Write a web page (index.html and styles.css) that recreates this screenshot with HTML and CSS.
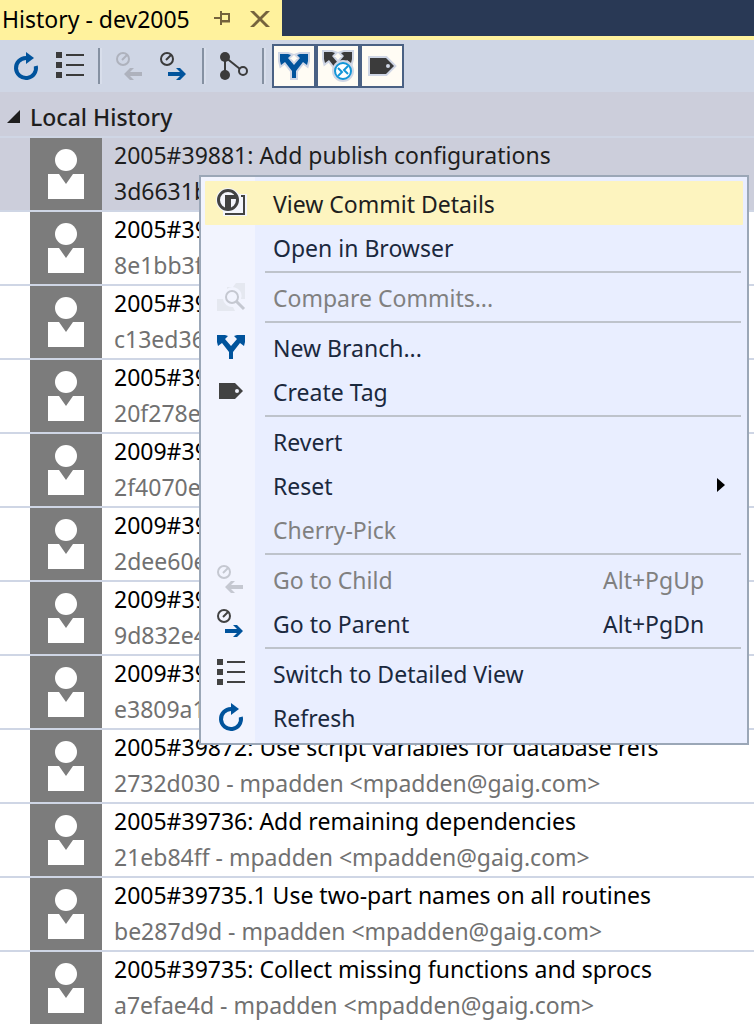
FILE: index.html
```html
<!DOCTYPE html>
<html lang="en">
<head>
<meta charset="utf-8">
<title>History - dev2005</title>
<link rel="stylesheet" href="styles.css">
</head>
<body>
<svg class="defs" aria-hidden="true">
  <symbol id="refresh" viewBox="0 0 32 32"><path d="M16 8A10 10 0 1 0 25.8 16" fill="none" stroke="currentColor" stroke-width="4"/><path d="M16 2l8 6-8 6z" fill="currentColor"/></symbol>
  <symbol id="list" viewBox="0 0 32 32"><path d="M2 2h6v6H2zM2 12h6v6H2zM2 22h6v6H2zM12 4h18v2H12zM12 14h18v2H12zM12 24h18v2H12z" fill="currentColor"/></symbol>
  <symbol id="clock" viewBox="0 0 32 32"><circle cx="9" cy="9" r="6" fill="none" stroke="currentColor" stroke-width="2"/><path d="M8 10l5-5" stroke="currentColor" stroke-width="2"/></symbol>
  <symbol id="arrow" viewBox="0 0 32 32"><path d="M10 22h12l-4-4h4l6 6-6 6h-4l4-4H10z" fill="currentColor"/></symbol>
  <symbol id="arrow-left" viewBox="0 0 32 32"><path d="M28 22H16l4-4h-4l-6 6 6 6h4l-4-4h12z" fill="currentColor"/></symbol>
  <symbol id="branch" viewBox="0 0 32 32" overflow="visible"><path d="M2 4h8l3 1-3 3 6 7 6-7-3-3 3-1h8v7l-1 4-4-3-7 9v7h-4v-7l-7-9-4 3-1-4z" fill="currentColor"/></symbol>
  <symbol id="tag" viewBox="0 0 32 32" overflow="visible"><path fill-rule="evenodd" d="M4 8h16l8 8-8 8H4zM22 14a2 2 0 1 0 0 4 2 2 0 0 0 0-4z" fill="currentColor"/></symbol>
  <symbol id="person" viewBox="0 0 72 72"><circle cx="36" cy="22" r="11" fill="#fff"/><path d="M18 36h11l7 10 7-10h11v25H18z" fill="#fff"/></symbol>
</svg>

<header class="tabs">
  <div class="tab">
    <h1 class="tab-title">History - dev2005</h1>
    <button class="tab-button" aria-label="Pin"><svg width="16" height="16"><path d="M0 7h6M7 0v14" fill="none" stroke="currentColor" stroke-width="2"/><path d="M7 3h8v7H7M7 10.500h9" fill="none" stroke="currentColor" stroke-width="2"/></svg></button>
    <button class="tab-button" aria-label="Close"><svg width="20" height="16"><path d="M0 0h4l6 6 6-6h4l-8 8 8 8h-4l-6-6-6 6H0l8-8z" fill="currentColor"/></svg></button>
  </div>
</header>

<div class="toolbar" role="toolbar" aria-label="History">
  <button class="tool blue" aria-label="Refresh"><svg class="icon"><use href="#refresh"/></svg></button>
  <button class="tool" aria-label="Detailed view"><svg class="icon"><use href="#list"/></svg></button>
  <span class="divider"></span>
  <button class="tool faded" aria-label="Go to child" disabled><svg class="icon"><use href="#clock"/><use href="#arrow-left"/></svg></button>
  <button class="tool" aria-label="Go to parent"><svg class="icon"><use href="#clock"/><use class="blue" href="#arrow"/></svg></button>
  <span class="divider"></span>
  <button class="tool" aria-label="Show graph"><svg class="icon"><path d="M7 7v18M7 7l15 12" stroke="currentColor" stroke-width="2"/><circle cx="7" cy="7" r="5" fill="currentColor"/><circle cx="7" cy="25" r="5" fill="currentColor"/><circle cx="25" cy="21" r="4" fill="none" stroke="currentColor" stroke-width="2"/></svg></button>
  <span class="divider"></span>
  <button class="tool pressed blue" aria-label="Local branches" aria-pressed="true"><svg class="icon halo"><use href="#branch"/></svg></button>
  <button class="tool pressed" aria-label="Remote branches" aria-pressed="true"><svg class="icon spill"><g class="halo"><use href="#branch" y="-2" width="32" height="32"/></g><circle cx="21" cy="21" r="11" fill="#cfd6e5"/><circle cx="21" cy="21" r="8" fill="#fff" stroke="#1396d8" stroke-width="2"/><path d="M16 18l4 4-4 4M26 16l-4 4 4 4" fill="none" stroke="#1396d8" stroke-width="2"/></svg></button>
  <button class="tool pressed" aria-label="Tags" aria-pressed="true"><svg class="icon halo"><use href="#tag"/></svg></button>
</div>

<main class="history">
  <h2 class="group"><svg class="expander" width="14" height="14"><path d="M13 0v13H0z" fill="currentColor"/></svg>Local History</h2>
  <ul class="commits">
    <li class="commit selected"><svg class="avatar"><use href="#person"/></svg><div class="text"><p>2005#39881: Add publish configurations</p><p class="meta">3d6631b</p></div></li>
    <li class="commit"><svg class="avatar"><use href="#person"/></svg><div class="text"><p>2005#39</p><p class="meta">8e1bb3f</p></div></li>
    <li class="commit"><svg class="avatar"><use href="#person"/></svg><div class="text"><p>2005#39</p><p class="meta">c13ed36</p></div></li>
    <li class="commit"><svg class="avatar"><use href="#person"/></svg><div class="text"><p>2005#39</p><p class="meta">20f278e</p></div></li>
    <li class="commit"><svg class="avatar"><use href="#person"/></svg><div class="text"><p>2009#39</p><p class="meta">2f4070e</p></div></li>
    <li class="commit"><svg class="avatar"><use href="#person"/></svg><div class="text"><p>2009#39</p><p class="meta">2dee60e</p></div></li>
    <li class="commit"><svg class="avatar"><use href="#person"/></svg><div class="text"><p>2009#39</p><p class="meta">9d832e4</p></div></li>
    <li class="commit"><svg class="avatar"><use href="#person"/></svg><div class="text"><p>2009#39</p><p class="meta">e3809a1</p></div></li>
    <li class="commit"><svg class="avatar"><use href="#person"/></svg><div class="text"><p>2005#39872: Use script variables for database refs</p><p class="meta">2732d030 - mpadden &lt;mpadden@gaig.com&gt;</p></div></li>
    <li class="commit"><svg class="avatar"><use href="#person"/></svg><div class="text"><p>2005#39736: Add remaining dependencies</p><p class="meta">21eb84ff - mpadden &lt;mpadden@gaig.com&gt;</p></div></li>
    <li class="commit"><svg class="avatar"><use href="#person"/></svg><div class="text"><p>2005#39735.1 Use two-part names on all routines</p><p class="meta">be287d9d - mpadden &lt;mpadden@gaig.com&gt;</p></div></li>
    <li class="commit"><svg class="avatar"><use href="#person"/></svg><div class="text"><p>2005#39735: Collect missing functions and sprocs</p><p class="meta">a7efae4d - mpadden &lt;mpadden@gaig.com&gt;</p></div></li>
  </ul>
</main>

<div class="menu" role="menu">
  <button class="item active" role="menuitem"><svg class="icon"><path d="M10 7h22v22H8v-8z" fill="#f4f5fc"/><circle cx="13" cy="13" r="12" fill="#f4f5fc"/><path d="M26 9h3v18H10" fill="none" stroke="currentColor" stroke-width="2"/><circle cx="13" cy="13" r="9.500" fill="none" stroke="currentColor" stroke-width="3"/><path d="M10 8h12v4h-6v10h-6z" fill="currentColor"/></svg><span class="label">View Commit Details</span></button>
  <button class="item" role="menuitem"><span class="icon"></span><span class="label">Open in Browser</span></button>
  <hr class="rule">
  <button class="item" role="menuitem" disabled><svg class="icon"><path d="M12 6h6l3-4h9v16h-4a9 9 0 0 0-14-10zM2 18h6a9 9 0 0 0 10 8l2 4H2z" fill="#e5e8f0"/><circle cx="17" cy="16" r="6" fill="none" stroke="currentColor" stroke-width="2"/><path d="M21 20l8 8" stroke="currentColor" stroke-width="3"/></svg><span class="label">Compare Commits...</span></button>
  <hr class="rule">
  <button class="item" role="menuitem"><svg class="icon blue"><use href="#branch"/></svg><span class="label">New Branch...</span></button>
  <button class="item" role="menuitem"><svg class="icon"><use href="#tag"/></svg><span class="label">Create Tag</span></button>
  <hr class="rule">
  <button class="item" role="menuitem"><span class="icon"></span><span class="label">Revert</span></button>
  <button class="item" role="menuitem" aria-haspopup="true"><span class="icon"></span><span class="label">Reset</span><svg class="submenu" width="8" height="14"><path d="M0 0l8 7-8 7z"/></svg></button>
  <button class="item" role="menuitem" disabled><span class="icon"></span><span class="label">Cherry-Pick</span></button>
  <hr class="rule">
  <button class="item" role="menuitem" disabled><svg class="icon"><use href="#clock"/><use href="#arrow-left"/></svg><span class="label">Go to Child</span><span class="keys">Alt+PgUp</span></button>
  <button class="item" role="menuitem"><svg class="icon"><use href="#clock"/><use class="blue" href="#arrow"/></svg><span class="label">Go to Parent</span><span class="keys">Alt+PgDn</span></button>
  <hr class="rule">
  <button class="item" role="menuitem"><svg class="icon"><use href="#list"/></svg><span class="label">Switch to Detailed View</span></button>
  <button class="item" role="menuitem"><svg class="icon blue"><use href="#refresh"/></svg><span class="label">Refresh</span></button>
</div>
</body>
</html>
```

FILE: styles.css
```css
* { box-sizing: border-box; }

body {
  margin: 0;
  position: relative;
  overflow: hidden;
  background: #fff;
  color: #000;
  font: 23px/34px "Noto Sans", "Open Sans", sans-serif;
}

h1, h2, p, ul { margin: 0; padding: 0; font: inherit; }

button {
  border: 0;
  padding: 0;
  background: none;
  color: inherit;
  font: inherit;
  text-align: left;
}

.defs { display: none; }
svg { display: block; flex: none; }

.tabs {
  display: flex;
  background: #293955;
  border-bottom: 4px solid #fff29d;
}

.tab {
  display: flex;
  align-items: center;
  height: 36px;
  padding: 2px 12px 0 2px;
  background: #fff29d;
}

.tab-title { width: 212px; white-space: nowrap; }
.tab-button { width: 36px; color: #75633d; }
.tab-button:last-child { width: 20px; }

.toolbar {
  display: flex;
  align-items: center;
  height: 52px;
  padding: 0 4px;
  background: #cfd6e5;
}

.tool {
  display: flex;
  align-items: center;
  justify-content: center;
  width: 44px;
  height: 44px;
  color: #3b3b3b;
}

.icon { width: 32px; height: 32px; flex: none; color: #424242; }
.tool .icon { color: inherit; }
.blue, .tool.blue, .icon.blue { color: #00539c; }
.tool.faded { color: #aeb2bd; }
.pressed { border: 2px solid #4a6184; background: #fffcf4; }
.spill { overflow: visible; }
.halo { stroke: #cfd6e5; stroke-width: 4px; paint-order: stroke; overflow: visible; }

.divider {
  width: 4px;
  height: 36px;
  margin: 0 6px;
  border-left: 2px solid #8591a2;
  background: #d8deeb;
}

.group {
  display: flex;
  align-items: center;
  height: 46px;
  padding: 6px 0 0 7px;
  background: #cccedb;
  border-bottom: 2px solid #cfd6e5;
  color: #1e1e1e;
  font-weight: 500;
}

.expander { width: 23px; }

.commits { list-style: none; }

.commit {
  display: flex;
  gap: 12px;
  padding-left: 30px;
  border-bottom: 2px solid #cfd6e5;
  white-space: nowrap;
}

.text {
  display: flex;
  flex-direction: column;
  gap: 2px;
}

.avatar { width: 72px; height: 72px; background: #7c7c7c; }
.meta { color: #717171; }
.selected, .selected .meta { color: #1e1e1e; }
.selected { background: #cccedb; }

.menu {
  position: absolute;
  top: 175px;
  left: 199px;
  right: 5px;
  padding: 4px;
  border: 2px solid #9ba7b7;
  background: linear-gradient(to right, #f2f4fe 54px, #e9eeff 54px);
  color: #1b293e;
}

.item {
  display: flex;
  align-items: center;
  width: 100%;
  height: 44px;
  padding: 0 18px 0 10px;
}

.label { flex: 1; padding: 2px 0 0 26px; }
.keys { width: 122px; padding-top: 2px; }
.item:disabled { color: #808080; }
.item:disabled .icon { color: #c5c8d1; }
.active { background: #fdf4bf; border-radius: 1px; color: #1e1e1e; }

.rule {
  height: 2px;
  margin: 2px 2px 2px 60px;
  border: 0;
  background: #bec3cb;
}
```
